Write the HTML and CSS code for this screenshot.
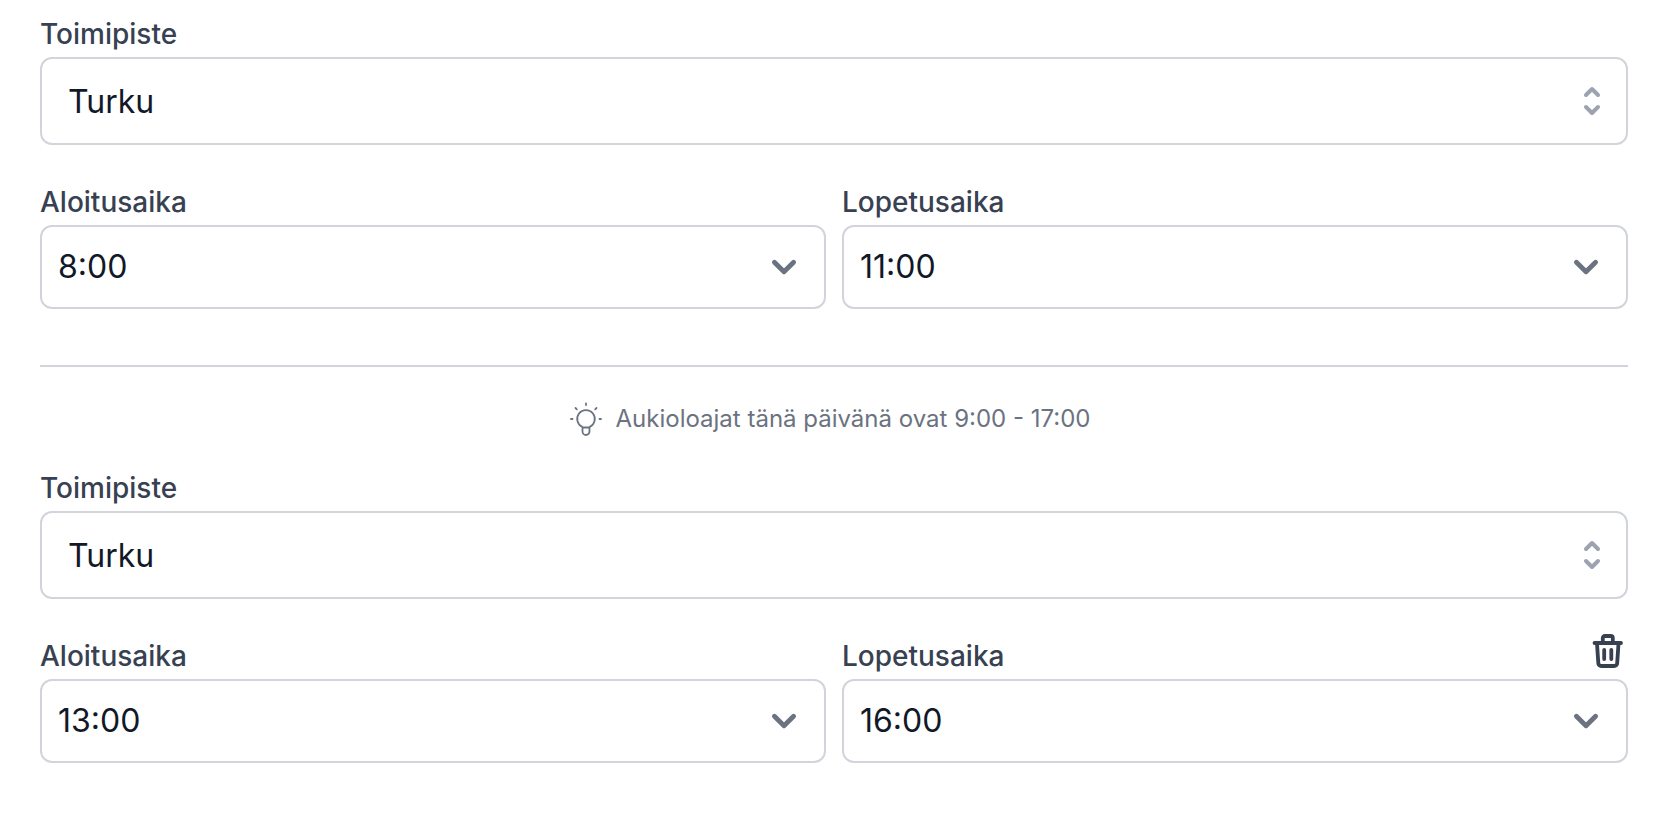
FILE: index.html
```html
<!DOCTYPE html>
<html lang="fi">
<head>
    <meta charset="UTF-8">
    <meta name="viewport" content="width=device-width, initial-scale=1.0">
    <title>Toimipiste</title>
    <link rel="stylesheet" href="styles.css">
</head>
<body>

    <form class="shifts">

        <section class="shift">
            <div class="field">
                <label for="office-1">Toimipiste</label>
                <div class="select-box">
                    <select id="office-1" class="office">
                        <option>Turku</option>
                    </select>
                    <svg class="selector" viewBox="0 0 20 20" aria-hidden="true"><path d="M7 7l3-3 3 3M7 13l3 3 3-3"/></svg>
                </div>
            </div>

            <div class="times">
                <div class="field">
                    <label for="start-1">Aloitusaika</label>
                    <div class="select-box">
                        <select id="start-1" class="time">
                            <option>8:00</option>
                        </select>
                        <svg class="chevron" viewBox="0 0 20 20" aria-hidden="true"><path d="M6 8l4 4 4-4"/></svg>
                    </div>
                </div>
                <div class="field">
                    <label for="end-1">Lopetusaika</label>
                    <div class="select-box">
                        <select id="end-1" class="time">
                            <option>11:00</option>
                        </select>
                        <svg class="chevron" viewBox="0 0 20 20" aria-hidden="true"><path d="M6 8l4 4 4-4"/></svg>
                    </div>
                </div>
            </div>
        </section>

        <hr class="divider">

        <p class="hint">
            <svg class="bulb" viewBox="0 0 36 36" aria-hidden="true">
                <path d="M14.5 26a8.8 8.8 0 1 1 7 0v4.500a3.500 3.500 0 0 1-7 0zM14.500 26.500h7M18 2.500v1.500M7.500 7l1.300 1.300M28.500 7l-1.300 1.300M3 18h1.500M31.500 18H33"/>
            </svg>
            <span>Aukioloajat tänä päivänä ovat 9:00 - 17:00</span>
        </p>

        <section class="shift">
            <div class="field">
                <label for="office-2">Toimipiste</label>
                <div class="select-box">
                    <select id="office-2" class="office">
                        <option>Turku</option>
                    </select>
                    <svg class="selector" viewBox="0 0 20 20" aria-hidden="true"><path d="M7 7l3-3 3 3M7 13l3 3 3-3"/></svg>
                </div>
            </div>

            <div class="times">
                <div class="field">
                    <label for="start-2">Aloitusaika</label>
                    <div class="select-box">
                        <select id="start-2" class="time">
                            <option>13:00</option>
                        </select>
                        <svg class="chevron" viewBox="0 0 20 20" aria-hidden="true"><path d="M6 8l4 4 4-4"/></svg>
                    </div>
                </div>
                <div class="field">
                    <div class="label-row">
                        <label for="end-2">Lopetusaika</label>
                        <button type="button" class="remove" aria-label="Poista">
                            <svg viewBox="0 0 32 36" aria-hidden="true">
                                <path d="M2.500 10h26.500M5 10.500l1.300 19.500a3 3 0 0 0 3 3h12.900a3 3 0 0 0 3-3L26.500 10.500M10.800 9.500V5a2 2 0 0 1 2-2h6a2 2 0 0 1 2 2v4.500M12.200 17v9M19.300 17v9"/>
                            </svg>
                        </button>
                    </div>
                    <div class="select-box">
                        <select id="end-2" class="time">
                            <option>16:00</option>
                        </select>
                        <svg class="chevron" viewBox="0 0 20 20" aria-hidden="true"><path d="M6 8l4 4 4-4"/></svg>
                    </div>
                </div>
            </div>
        </section>

    </form>

</body>
</html>
```

FILE: styles.css
```css
*{
    box-sizing: border-box;
}
body{
    margin: 0;
    background-color: white;
    font-family: Inter, "Liberation Sans", sans-serif;
}
.shifts{
    padding: 15px 40px 40px;
}
.shift{
    display: flex;
    flex-direction: column;
    gap: 38px;
}
.times{
    display: grid;
    grid-template-columns: 1fr 1fr;
    gap: 16px;
}
label{
    display: block;
    margin-bottom: 4px;
    color: #374151;
    font-size: 28px;
    font-weight: 500;
    line-height: 38px;
}
.label-row{
    display: flex;
    align-items: flex-end;
    justify-content: space-between;
}
.select-box{
    position: relative;
}
select{
    display: block;
    width: 100%;
    appearance: none;
    border: 2px solid #d1d5db;
    border-radius: 12px;
    background-color: white;
    color: #111827;
    font-family: inherit;
    font-size: 32px;
    line-height: 40px;
}
.office{
    height: 88px;
    padding: 2px 64px 0 26px;
}
.time{
    height: 84px;
    padding: 0 64px 0 16px;
}
svg{
    display: block;
    fill: none;
    stroke: currentColor;
    stroke-width: 2;
    stroke-linecap: round;
    stroke-linejoin: round;
}

/* arrows lie over the selects */
.selector, .chevron{
    position: absolute;
    top: 0;
    bottom: 0;
    margin: auto 0;
    pointer-events: none;
}
.selector{
    right: 16px;
    width: 40px;
    height: 40px;
    color: #9ca3af;
}
.chevron{
    right: 18px;
    width: 48px;
    height: 48px;
    color: #6b7280;
}
.divider{
    margin: 56px 0 0;
    border: 0;
    border-top: 2px solid #d1d5db;
}
.hint{
    display: flex;
    align-items: center;
    justify-content: center;
    gap: 12px;
    margin: 0;
    padding: 34px 10px 32px 0;
    color: #6b7280;
    font-size: 24px;
    line-height: 32px;
}
.bulb{
    width: 36px;
    height: 36px;
    stroke-width: 1.8;
}
.remove{
    margin: -8px 4px 10px 0;
    padding: 0;
    border: 0;
    background: none;
    color: #374151;
    cursor: pointer;
}
.remove svg{
    width: 32px;
    height: 36px;
    stroke-width: 3.8;
}
```
